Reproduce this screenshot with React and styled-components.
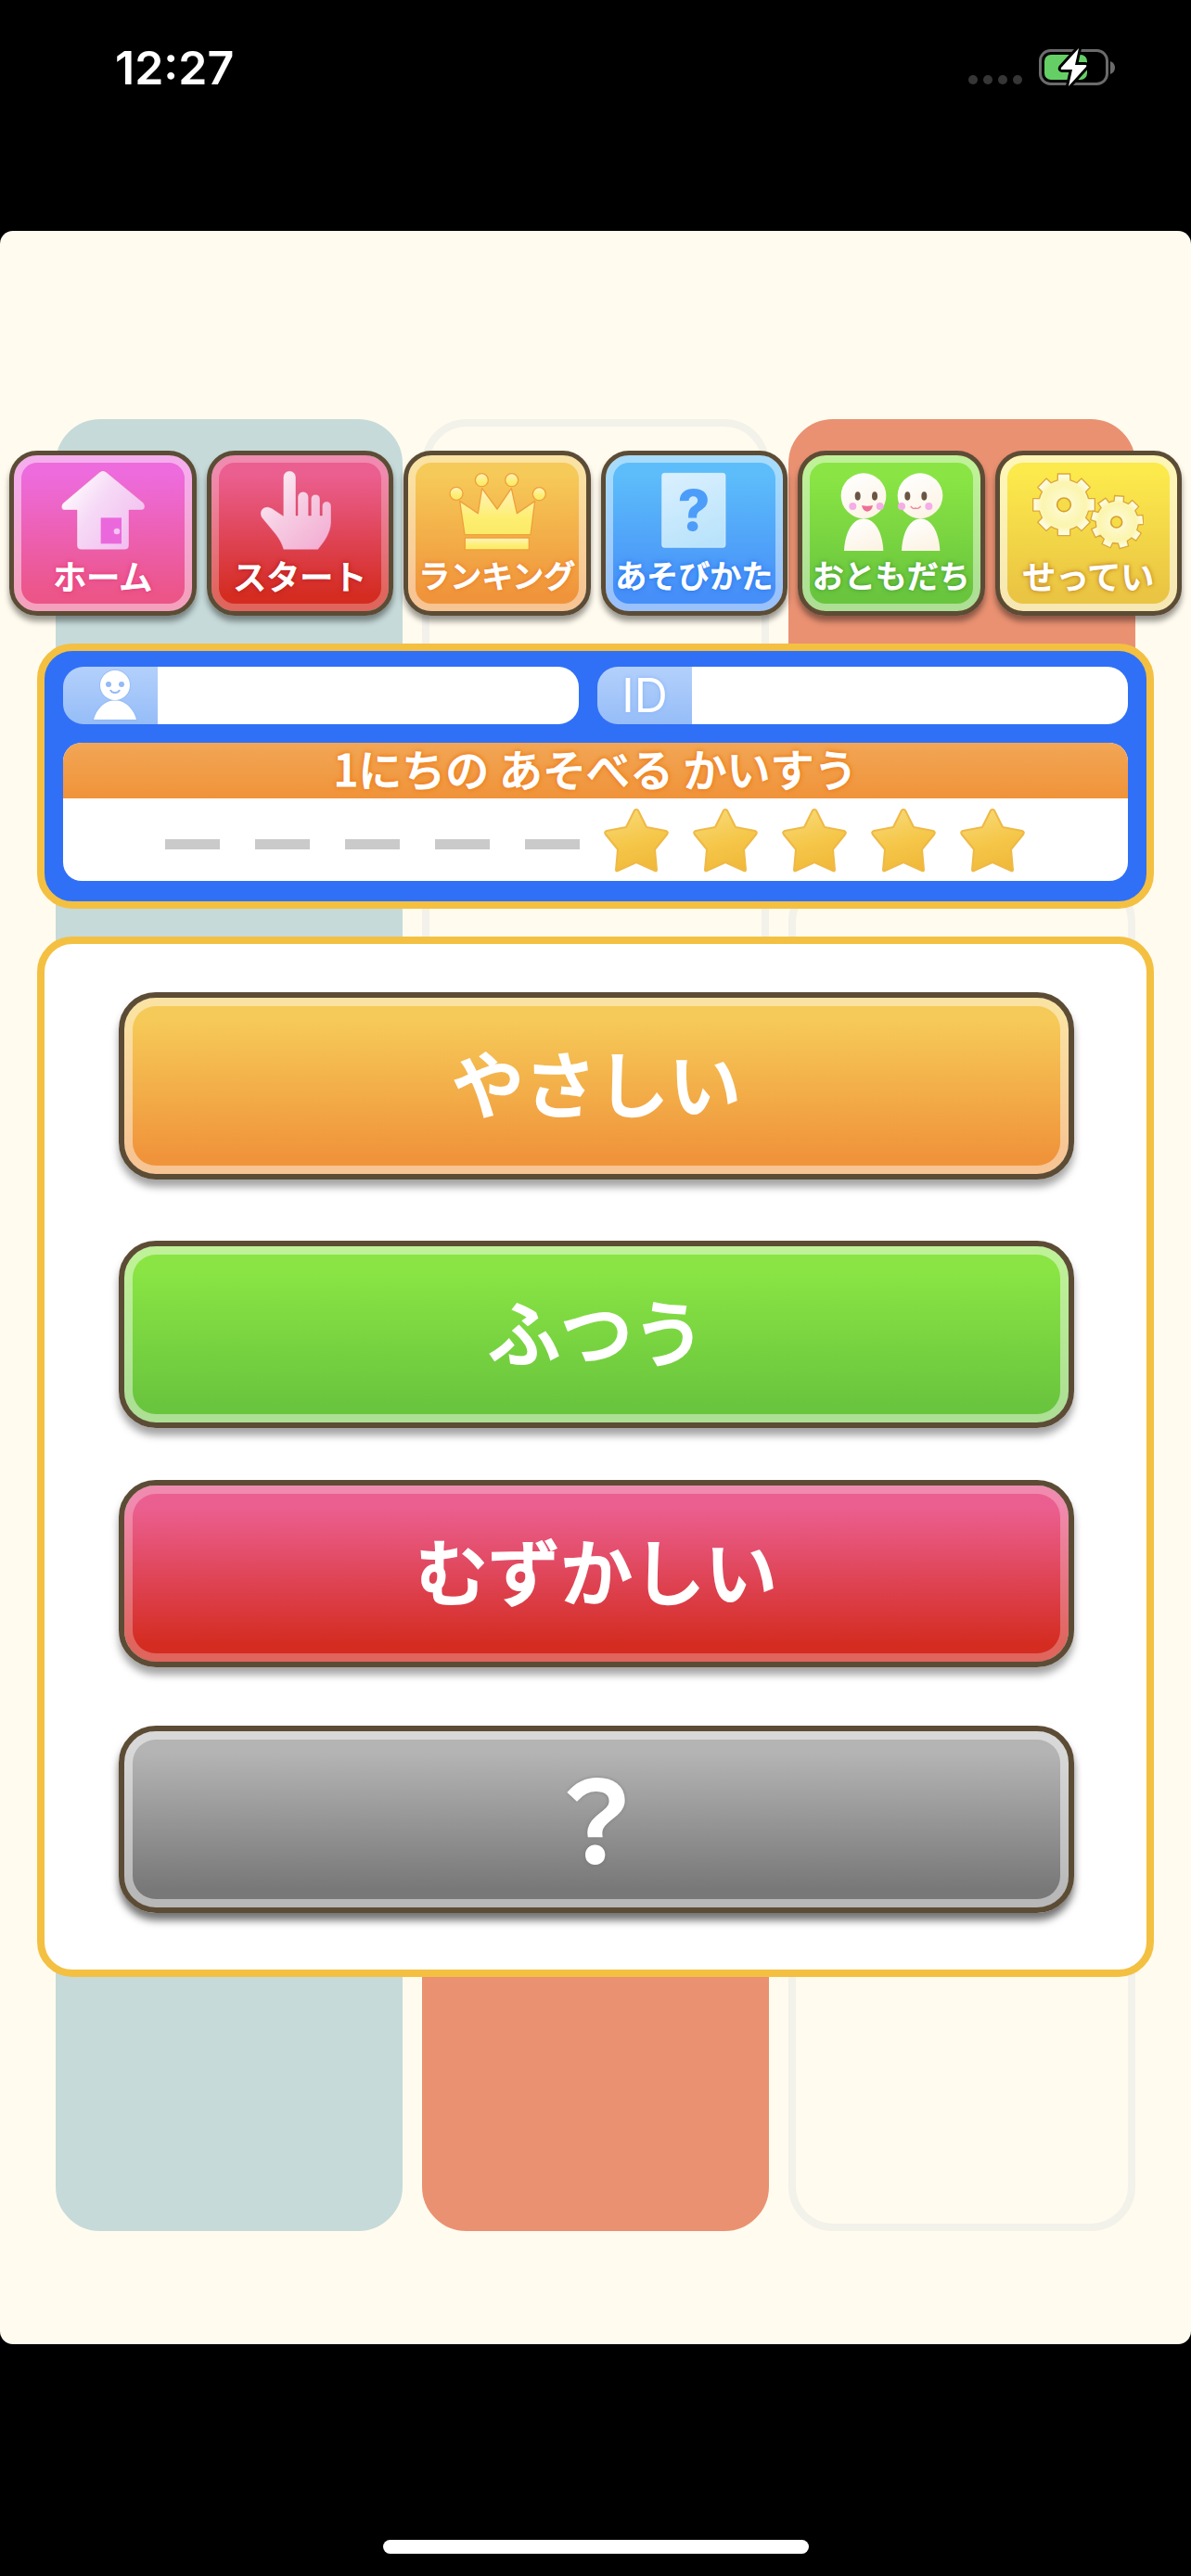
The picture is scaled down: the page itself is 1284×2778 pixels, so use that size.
import React from "react";
import styled, { createGlobalStyle } from "styled-components";

const tones = {
  pink: { top: "#ed6bdd", bottom: "#ec5588", ring: 0.45, glow: "#e8407f" },
  red: { top: "#eb5f90", bottom: "#d42c21", ring: 0.27, glow: "#c22424" },
  orange: { top: "#f6ca58", bottom: "#f0943b", ring: 0.45, glow: "#ec8430" },
  blue: { top: "#5dbdfa", bottom: "#468ff8", ring: 0.45, glow: "#2f7df2" },
  green: { top: "#8ae544", bottom: "#6ac53e", ring: 0.45, glow: "#4fa836" },
  yellow: { top: "#fce94c", bottom: "#eac443", ring: 0.6, glow: "#c98f24" },
  gray: { top: "#b4b4b4", bottom: "#787878", ring: 0.48, glow: "#7d7d7d" },
};

const GlobalStyle = createGlobalStyle`
  *, *::before, *::after { box-sizing: border-box; }
  body {
    margin: 0;
    background: #000;
    font-family: "Noto Sans CJK JP", "Noto Sans", sans-serif;
  }
  button, input { font: inherit; }
  svg { display: block; }
`;

const Screen = styled.div`
  display: flex;
  flex-direction: column;
  min-height: 100vh;
`;

const StatusBar = styled.header`
  display: flex;
  align-items: center;
  justify-content: space-between;
  height: 249px;
  padding: 0 81px 103px 124px;
  color: #fff;
`;

const Clock = styled.time`
  font-family: Inter, "Noto Sans", sans-serif;
  font-size: 50px;
  font-weight: 600;
  line-height: 60px;
`;

const StatusIcons = styled.div`
  display: flex;
  gap: 18px;
`;

const Game = styled.main`
  flex: 1;
  display: grid;
  border-radius: 14px;
  background: #fffbef;
`;

const Backdrop = styled.div`
  grid-area: 1 / 1;
  display: grid;
  grid-template-columns: repeat(3, 1fr);
  grid-template-rows: repeat(4, 1fr);
  gap: 21px;
  padding: 203px 60px 122px;
`;

const BackColumn = styled.div`
  grid-column: ${(p) => p.$col};
  grid-row: ${(p) => p.$rows};
  border: 8px solid ${(p) => (p.$fill ? p.$fill : "#f2f1ea")};
  border-radius: 48px;
  background: ${(p) => p.$fill || "transparent"};
`;

const Content = styled.div`
  grid-area: 1 / 1;
  display: flex;
  flex-direction: column;
  gap: 30px;
  padding: 237px 0 396px;
`;

const Menu = styled.nav`
  display: grid;
  grid-template-columns: repeat(6, 1fr);
  gap: 11px;
  padding: 0 10px;
`;

const GlossyButton = styled.button`
  display: flex;
  flex-direction: column;
  align-items: center;
  margin: 0;
  padding: 0;
  color: #fff;
  white-space: nowrap;
  cursor: pointer;
  border: solid #5c4c35;
  background: linear-gradient(
    ${(p) => tones[p.$tone].top} 12%,
    ${(p) => tones[p.$tone].bottom} 90%
  ) padding-box;
`;

const MenuButton = styled(GlossyButton)`
  height: 178px;
  padding-top: 14px;
  border-width: 5px;
  border-radius: 30px;
  box-shadow:
    inset 0 0 0 8px rgba(255, 255, 255, ${(p) => tones[p.$tone].ring}),
    0 6px 6px rgba(0, 0, 0, 0.4);
`;

const MenuLabel = styled.span`
  font-size: ${(p) => (p.$long ? 34 : 36)}px;
  line-height: 46px;
  font-weight: 500;
  -webkit-text-stroke: 1px #fff;
  stroke-linejoin: round;
  text-shadow:
    0 0 3px ${(p) => tones[p.$tone].glow},
    0 0 4px ${(p) => tones[p.$tone].glow},
    0 0 6px ${(p) => tones[p.$tone].glow};
`;

const Panel = styled.section`
  margin: 0 40px;
  border: 8px solid #f4c041;
  border-radius: 38px;
  background: ${(p) => p.$fill};
`;

const InfoPanel = styled(Panel)`
  display: flex;
  flex-direction: column;
  gap: 20px;
  padding: 17px 20px 22px;
`;

const Fields = styled.div`
  display: grid;
  grid-template-columns: 35fr 36fr;
  gap: 20px;
`;

const Field = styled.div`
  display: flex;
  height: 62px;
`;

const FieldLabel = styled.label`
  display: flex;
  align-items: center;
  justify-content: center;
  flex: none;
  width: 102px;
  border-radius: 22px 0 0 22px;
  color: #fff;
  font-family: Inter, "Noto Sans", sans-serif;
  font-size: 50px;
  line-height: 62px;
  background: linear-gradient(#b3d0fb, #96bdf8);
  text-shadow: 0 0 4px #86b2f6;
`;

const FieldInput = styled.input`
  flex: 1;
  min-width: 0;
  padding: 0 16px;
  border: 0;
  border-radius: 0 22px 22px 0;
  background: #fff;
  color: #333;
  font-size: 34px;
  outline: none;
`;

const PlayCount = styled.div`
  border-radius: 20px;
  background: #fff;
`;

const PlayTitle = styled.h2`
  margin: 0;
  padding-bottom: 6px;
  border-radius: 20px 20px 0 0;
  color: #fff;
  font-size: 47px;
  font-weight: 500;
  line-height: 54px;
  text-align: center;
  background: linear-gradient(#f2a655, #f0933a);
  -webkit-text-stroke: 1px #fff;
  stroke-linejoin: round;
  text-shadow: 0 0 4px #ee8222, 0 0 5px #ee8222, 0 0 6px #ee8222;
`;

const Plays = styled.div`
  display: flex;
  align-items: center;
  justify-content: center;
  gap: 25px;
  height: 89px;
`;

const UsedPlays = styled.div`
  display: flex;
  gap: 38px;
  padding-top: 10px;
`;

const LeftPlays = styled.div`
  display: flex;
  gap: 24px;
`;

const Used = styled.span`
  width: 59px;
  height: 11px;
  background: #cacaca;
`;

const LevelPanel = styled(Panel)`
  display: grid;
  grid-template-rows: 268px 258px 265px 202px;
  align-items: start;
  padding: 52px 78px 61px 80px;
`;

const LevelButton = styled(GlossyButton)`
  justify-content: center;
  height: 202px;
  padding-bottom: 10px;
  border-width: 6px;
  border-radius: 40px;
  font-size: ${(p) => (p.$mark ? 116 : 78)}px;
  line-height: 120px;
  font-weight: 500;
  -webkit-text-stroke: ${(p) => (p.$mark ? 4 : 2)}px #fff;
  stroke-linejoin: round;
  text-shadow: ${(p) => (p.$mark ? "0 0 5px #6f6f6f, 0 0 4px #6f6f6f" : "none")};
  box-shadow:
    inset 0 0 0 9px rgba(255, 255, 255, ${(p) => tones[p.$tone].ring}),
    0 8px 8px rgba(0, 0, 0, ${(p) => (p.$mark ? 0.55 : 0.36)});
`;

const HomeArea = styled.footer`
  display: flex;
  align-items: flex-end;
  justify-content: center;
  height: 250px;
  padding-bottom: 24px;
`;

const HomeBar = styled.div`
  width: 459px;
  height: 15px;
  border-radius: 8px;
  background: #fff;
`;

function Icon({ left, children }) {
  return (
    <svg width="120" height="92" viewBox={`${left} 195 360 276`} aria-hidden="true">
      {children}
    </svg>
  );
}

function HouseIcon() {
  return (
    <Icon left={151}>
      <defs>
        <linearGradient id="house" x1="0" y1="0.2" x2="1" y2="0.9">
          <stop offset="0" stopColor="#fff" />
          <stop offset="0.4" stopColor="#f6d9f6" />
          <stop offset="1" stopColor="#f1b9ef" />
        </linearGradient>
      </defs>
      <path
        d="M320 208 Q331 198 342 208 L462 307 Q470 318 464 326 Q461 330 454 330 H415 V444 Q415 458 401 458 H261 Q247 458 247 444 V330 H207 Q198 330 197 320 Q197 312 203 307 Z"
        fill="url(#house)"
        stroke="#e84f9c"
        strokeOpacity="0.35"
        strokeWidth="3"
      />
      <rect x="324" y="355" width="67" height="84" fill="#eb68dc" />
      <circle cx="376" cy="399" r="10" fill="#f6c3f2" />
    </Icon>
  );
}

function HandIcon() {
  return (
    <Icon left={789}>
      <defs>
        <linearGradient id="hand" x1="0.1" y1="0" x2="0.9" y2="1">
          <stop offset="0" stopColor="#fdf3f8" />
          <stop offset="0.5" stopColor="#f6cbe2" />
          <stop offset="1" stopColor="#f3acd1" />
        </linearGradient>
      </defs>
      <path
        d="M846 354 C834 332 856 310 880 325 L916 349 V224 A20.5 20.5 0 0 1 957 224 V348 H963 V288 A17.5 17.5 0 0 1 998 288 V348 H1006 V294 A14.5 14.5 0 0 1 1035 294 V348 H1042 V317 A14.5 14.5 0 0 1 1071 317 V372 C1069 405 1049 434 1028 458 H917 C908 430 896 414 884 400 Z"
        fill="url(#hand)"
        stroke="#d94468"
        strokeOpacity="0.4"
        strokeWidth="3"
      />
    </Icon>
  );
}

function CrownIcon() {
  return (
    <Icon left={167}>
      <defs>
        <linearGradient id="crown" x1="0" y1="0" x2="0" y2="1">
          <stop offset="0" stopColor="#fff3bd" />
          <stop offset="0.65" stopColor="#fdee70" />
          <stop offset="1" stopColor="#fbea68" />
        </linearGradient>
      </defs>
      <g fill="url(#crown)" stroke="#efa03a" strokeWidth="4" strokeLinejoin="round">
        <path d="M226 301 L285 341 L298 260 L347 327 L393 260 L411 341 L469 301 L455 410 H242 Z" />
        <rect x="243" y="420" width="207" height="39" />
        <circle cx="215" cy="277" r="21" />
        <circle cx="297" cy="233" r="21" />
        <circle cx="394" cy="233" r="21" />
        <circle cx="483" cy="278" r="21" />
      </g>
    </Icon>
  );
}

const CardMark = styled.text`
  font-family: Inter, "Noto Sans", sans-serif;
  font-size: 182px;
  font-weight: 800;
`;

function CardIcon() {
  return (
    <Icon left={805}>
      <defs>
        <linearGradient id="card" x1="0.3" y1="0" x2="0.6" y2="1">
          <stop offset="0" stopColor="#d8effe" />
          <stop offset="1" stopColor="#b9e3fb" />
        </linearGradient>
      </defs>
      <rect x="882" y="211" width="205" height="240" rx="8" fill="url(#card)" stroke="#e4f5ff" strokeWidth="2" />
      <CardMark x="985" y="397" textAnchor="middle" fill="#4c9df9">?</CardMark>
    </Icon>
  );
}

function FriendsIcon() {
  return (
    <Icon left={152}>
      <defs>
        <linearGradient id="friend" x1="0.2" y1="0" x2="0.7" y2="1">
          <stop offset="0" stopColor="#fff" />
          <stop offset="1" stopColor="#fcf3e4" />
        </linearGradient>
      </defs>
      <g fill="url(#friend)">
        <circle cx="242" cy="284" r="73" />
        <circle cx="425" cy="284" r="73" />
        <path d="M179 462 C182 400 208 358 242 358 C277 358 303 400 306 462 Z" />
        <path d="M365 462 C368 400 393 358 427 358 C460 358 486 400 489 462 Z" />
      </g>
      <g fill="#6a5443">
        <ellipse cx="223" cy="285" rx="9" ry="14" />
        <ellipse cx="278" cy="285" rx="9" ry="14" />
        <ellipse cx="384" cy="285" rx="9" ry="14" />
        <ellipse cx="438" cy="285" rx="9" ry="14" />
      </g>
      <g fill="#f3aee8">
        <circle cx="207" cy="318" r="12" />
        <circle cx="295" cy="318" r="12" />
        <circle cx="365" cy="318" r="12" />
        <circle cx="453" cy="318" r="12" />
      </g>
      <path d="M236 315 Q254 320 272 315 Q268 334 254 335 Q240 334 236 315 Z" fill="#ec6f98" />
      <path d="M394 318 Q403 329 410 323 Q418 329 427 318" fill="none" stroke="#ee86a8" strokeWidth="4" />
    </Icon>
  );
}

// Outline of a cog with evenly spaced square teeth.
function gearPath(cx, cy, outer, root, teeth, turn) {
  const step = (Math.PI * 2) / teeth;
  const at = (r, a) => `${(cx + r * Math.sin(a)).toFixed(1)} ${(cy - r * Math.cos(a)).toFixed(1)}`;
  let d = "";
  for (let i = 0; i < teeth; i += 1) {
    const a = i * step + turn;
    d += `${i ? "L" : "M"}${at(root, a - step * 0.32)} L${at(outer, a - step * 0.25)} L${at(outer, a + step * 0.25)} L${at(root, a + step * 0.32)} `;
    d += `A${root} ${root} 0 0 1 ${at(root, a + step * 0.68)} `;
  }
  return `${d}Z`;
}

function GearsIcon() {
  return (
    <Icon left={791}>
      <defs>
        <radialGradient id="gear">
          <stop offset="0" stopColor="#fffde8" />
          <stop offset="0.35" stopColor="#fdf8c4" />
          <stop offset="0.7" stopColor="#fbf5ae" />
          <stop offset="1" stopColor="#fffdee" />
        </radialGradient>
      </defs>
      <g fill="url(#gear)" stroke="#dba838" strokeWidth="4" strokeLinejoin="round">
        <path d={gearPath(893, 313, 102, 82, 8, 0)} />
        <path d={gearPath(1065, 369, 86, 69, 9, 0.08)} />
      </g>
      <g fill="#f6dc48" stroke="#d5a02f" strokeWidth="5">
        <circle cx="893" cy="313" r="22" />
        <circle cx="1063" cy="369" r="18" />
      </g>
    </Icon>
  );
}

function PlayerIcon() {
  return (
    <svg width="102" height="62" viewBox="0 0 102 62" role="img" aria-label="プレイヤー">
      <g fill="#fff" stroke="#86b2f6" strokeOpacity="0.45" strokeWidth="2" paintOrder="stroke">
        <path d="M33 57 C36 45 46 36 56 36 C66 36 76 45 79 57 Z" />
        <circle cx="56" cy="20" r="16" />
      </g>
      <g fill="#93b9f7">
        <ellipse cx="49" cy="19" rx="3" ry="3" />
        <ellipse cx="63" cy="19" rx="3" ry="3" />
      </g>
      <path d="M51 25 Q52 28 56 28 Q60 28 61 25" fill="none" stroke="#93b9f7" strokeWidth="2" />
    </svg>
  );
}

function Star() {
  return (
    <svg width="72" height="70" viewBox="0 0 72 70" aria-hidden="true">
      <defs>
        <linearGradient id="star" x1="0.3" y1="0" x2="0.6" y2="1">
          <stop offset="0" stopColor="#f8d976" />
          <stop offset="0.55" stopColor="#f5c648" />
          <stop offset="1" stopColor="#f0b93b" />
        </linearGradient>
      </defs>
      <path
        d="M34 3 Q36 1 38 3 L47 21 L68 25 Q71 26 69 29 L56 45 L58 67 Q58 69 56 68 L36 59 L16 68 Q14 69 14 67 L16 45 L3 29 Q1 26 4 25 L25 21 Z"
        fill="url(#star)"
        stroke="#efb945"
        strokeWidth="2"
        strokeLinejoin="round"
      />
    </svg>
  );
}

const menuItems = [
  { label: "ホーム", tone: "pink", Glyph: HouseIcon },
  { label: "スタート", tone: "red", Glyph: HandIcon },
  { label: "ランキング", tone: "orange", Glyph: CrownIcon },
  { label: "あそびかた", tone: "blue", Glyph: CardIcon },
  { label: "おともだち", tone: "green", Glyph: FriendsIcon },
  { label: "せってい", tone: "yellow", Glyph: GearsIcon },
];

const levels = [
  { label: "やさしい", tone: "orange" },
  { label: "ふつう", tone: "green" },
  { label: "むずかしい", tone: "red" },
  { label: "？", tone: "gray", mark: true },
];

const slots = [0, 1, 2, 3, 4];

export default function App() {
  return (
    <Screen>
      <GlobalStyle />
      <StatusBar>
        <Clock>12:27</Clock>
        <StatusIcons>
          <svg width="58" height="40" viewBox="0 0 58 40" aria-hidden="true">
            <g fill="#363636">
              <circle cx="5" cy="33" r="5" />
              <circle cx="21" cy="33" r="5" />
              <circle cx="37" cy="33" r="5" />
              <circle cx="53" cy="33" r="5" />
            </g>
          </svg>
          <svg width="83" height="40" viewBox="0 0 83 40" overflow="visible" aria-hidden="true">
            <rect x="1.5" y="1.5" width="72" height="36" rx="11" fill="none" stroke="#6b6b6b" strokeWidth="3" />
            <path d="M77 13 Q82 15 82 20 Q82 25 77 27 Z" fill="#6b6b6b" />
            <rect x="6" y="6" width="46" height="27" rx="7" fill="#65cf66" />
            <path
              d="M43 -1 L24 20 Q23 22 25 22 L36 22 L32 40 L51 19 Q52 17 50 17 L39 17 Z"
              fill="#fff"
              stroke="#000"
              strokeWidth="6"
              strokeLinejoin="round"
              paintOrder="stroke"
            />
          </svg>
        </StatusIcons>
      </StatusBar>

      <Game>
        <Backdrop aria-hidden="true">
          <BackColumn $col="1" $rows="1 / 5" $fill="#c6dad9" />
          <BackColumn $col="2" $rows="1 / 4" />
          <BackColumn $col="2" $rows="4 / 5" $fill="#ea9172" />
          <BackColumn $col="3" $rows="1 / 2" $fill="#ea9172" />
          <BackColumn $col="3" $rows="2 / 5" />
        </Backdrop>

        <Content>
          <Menu>
            {menuItems.map(({ label, tone, Glyph }) => (
              <MenuButton key={label} type="button" $tone={tone}>
                <Glyph />
                <MenuLabel $tone={tone} $long={label.length > 4}>
                  {label}
                </MenuLabel>
              </MenuButton>
            ))}
          </Menu>

          <InfoPanel $fill="#3070f6">
            <Fields>
              <Field>
                <FieldLabel htmlFor="player-name">
                  <PlayerIcon />
                </FieldLabel>
                <FieldInput id="player-name" type="text" />
              </Field>
              <Field>
                <FieldLabel htmlFor="player-id">ID</FieldLabel>
                <FieldInput id="player-id" type="text" />
              </Field>
            </Fields>
            <PlayCount>
              <PlayTitle>1にちの あそべる かいすう</PlayTitle>
              <Plays>
                <UsedPlays>
                  {slots.map((n) => (
                    <Used key={n} />
                  ))}
                </UsedPlays>
                <LeftPlays>
                  {slots.map((n) => (
                    <Star key={n} />
                  ))}
                </LeftPlays>
              </Plays>
            </PlayCount>
          </InfoPanel>

          <LevelPanel $fill="#fff">
            {levels.map(({ label, tone, mark }) => (
              <LevelButton key={label} type="button" $tone={tone} $mark={mark}>
                {label}
              </LevelButton>
            ))}
          </LevelPanel>
        </Content>
      </Game>

      <HomeArea>
        <HomeBar />
      </HomeArea>
    </Screen>
  );
}
